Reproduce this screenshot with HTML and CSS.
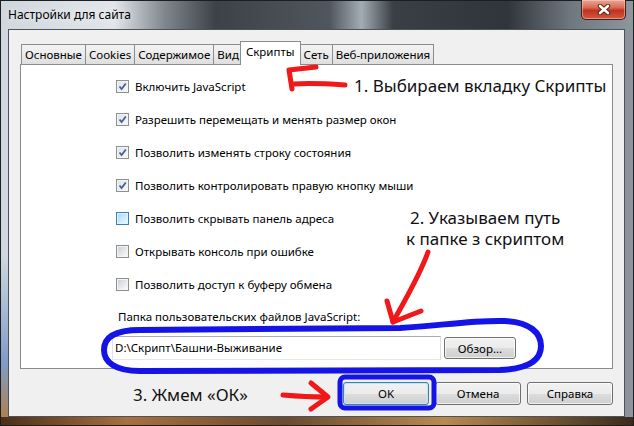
FILE: index.html
```html
<!DOCTYPE html>
<html lang="ru">
<head>
  <meta charset="UTF-8">
  <meta name="viewport" content="width=device-width, initial-scale=1.0">
  <title>Настройки для сайта</title>
  <link rel="stylesheet" href="styles.css">
</head>
<body>
  <div class="window">
    <!-- Заголовок окна -->
    <div class="titlebar">
      <span class="title">Настройки для сайта</span>
      <div class="close">
        <svg width="14" height="11" viewBox="0 0 14 11">
          <path d="M3 2 L11 9 M11 2 L3 9" stroke="#5a2418" stroke-width="4.5" stroke-linecap="round"/>
          <path d="M3 2 L11 9 M11 2 L3 9" stroke="#fff" stroke-width="2.6" stroke-linecap="round"/>
        </svg>
      </div>
    </div>

    <div class="client">
      <!-- Вкладки -->
      <div class="tabs">
        <div class="tab">Основные</div>
        <div class="tab">Cookies</div>
        <div class="tab">Содержимое</div>
        <div class="tab">Вид</div>
        <div class="tab active">Скрипты</div>
        <div class="tab">Сеть</div>
        <div class="tab">Веб-приложения</div>
      </div>

      <div class="panel">
        <div class="option"><span class="check checked"><svg width="9" height="9" viewBox="0 0 9 9"><path d="M1.5 4.5 L3.6 7 L7.8 1.5" fill="none" stroke="#4a5f8f" stroke-width="1.8"/></svg></span>Включить JavaScript</div>
        <div class="option"><span class="check checked"><svg width="9" height="9" viewBox="0 0 9 9"><path d="M1.5 4.5 L3.6 7 L7.8 1.5" fill="none" stroke="#4a5f8f" stroke-width="1.8"/></svg></span>Разрешить перемещать и менять размер окон</div>
        <div class="option"><span class="check checked"><svg width="9" height="9" viewBox="0 0 9 9"><path d="M1.5 4.5 L3.6 7 L7.8 1.5" fill="none" stroke="#4a5f8f" stroke-width="1.8"/></svg></span>Позволить изменять строку состояния</div>
        <div class="option"><span class="check checked"><svg width="9" height="9" viewBox="0 0 9 9"><path d="M1.5 4.5 L3.6 7 L7.8 1.5" fill="none" stroke="#4a5f8f" stroke-width="1.8"/></svg></span>Позволить контролировать правую кнопку мыши</div>
        <div class="option"><span class="check hover"></span>Позволить скрывать панель адреса</div>
        <div class="option"><span class="check"></span>Открывать консоль при ошибке</div>
        <div class="option"><span class="check"></span>Позволить доступ к буферу обмена</div>

        <div class="folder-label">Папка пользовательских файлов JavaScript:</div>
        <div class="folder-row">
          <div class="input">D:\Скрипт\Башни-Выживание</div>
          <div class="btn browse">Обзор...</div>
        </div>
      </div>

      <div class="buttons">
        <div class="btn default">OK</div>
        <div class="btn">Отмена</div>
        <div class="btn">Справка</div>
      </div>
    </div>

    <!-- Пометки поверх скриншота -->
    <div class="notes">
      <svg class="marks" width="634" height="426" viewBox="0 0 634 426">
        <g fill="none" stroke="#f01818" stroke-width="5" stroke-linecap="round" stroke-linejoin="round">
          <path d="M316 67 L289 70 L292 89"/>
          <path d="M294 84 C310 83 330 84 345 85"/>
          <path d="M428 252 C420 275 405 300 393 322"/>
          <path d="M387 301 L393 322 L421 311"/>
          <path d="M283 395 C295 396 310 397 325 397"/>
          <path d="M311 383 L328 397 L311 409"/>
        </g>
        <g fill="none" stroke="#1414e6" stroke-linecap="round" stroke-linejoin="round">
          <path d="M140 330 L400 328 C440 326 470 320 505 321 C530 322 541 333 541 346 C541 362 525 369 500 370 L140 371 C115 371 104 362 104 350 C104 337 115 330 140 330 Z" stroke-width="6"/>
          <rect x="340" y="377" width="94" height="31" rx="5" stroke-width="5"/>
        </g>
      </svg>
      <div class="note note-1">1. Выбираем вкладку Скрипты</div>
      <div class="note note-2">2. Указываем путь<br>к папке з скриптом</div>
      <div class="note note-3">3. Жмем «ОК»</div>
    </div>
  </div>
</body>
</html>
```

FILE: styles.css
```css
body {
  margin: 0;
  padding: 0;
  background: #000;
  font-family: 'Noto Sans', 'Open Sans', sans-serif;
  font-size: 11.5px;
  color: #000;
}

/* Окно */
.window {
  position: relative;
  width: 634px;
  height: 426px;
  box-sizing: border-box;
  padding: 0 9px 9px 8px;
  display: flex;
  flex-direction: column;
  background:
    linear-gradient(90deg, #4a2e1a, #a8703e 20%, #6a4a30 45%, #b88a50 70%, #3a2a1c) bottom / 100% 9px no-repeat,
    linear-gradient(180deg, transparent 60%, #7f9dc8 85%, #b57b3e 100%) left / 8px 100% no-repeat,
    linear-gradient(90deg, #cfd6dd 0%, #e2e6ea 18%, #7f868d 26%, #3d4248 34%, #50565d 52%, #a3acb4 57%, #3a3f45 62%, #30353b 80%, #6f777f 90%, #8e979f 100%);
  box-shadow: inset 0 0 0 1px #1c1f22;
}

/* Заголовок */
.titlebar {
  height: 29px;
  display: flex;
  justify-content: space-between;
  align-items: flex-start;
}

.title {
  margin-top: 7px;
  font-size: 12px;
  line-height: 16px;
  color: #000;
  text-shadow: 0 0 8px rgba(255, 255, 255, 0.9);
}

.close {
  width: 45px;
  height: 20px;
  box-sizing: border-box;
  margin-right: -1px;
  border: 1px solid #4a1b12;
  border-top: none;
  border-radius: 0 0 5px 5px;
  background: linear-gradient(180deg, #e9a898 0%, #d86a54 40%, #c2321d 55%, #cf5a44 100%);
  box-shadow: inset 0 0 0 1px rgba(255, 210, 200, 0.5);
  display: flex;
  justify-content: center;
  align-items: center;
}

/* Клиентская область */
.client {
  flex: 1;
  background: #f0f0f0;
  border: 1px solid #4d535a;
  padding: 0 11px 10px 11px;
}

.tabs {
  margin-top: 11px;
  height: 23px;
  padding-left: 1px;
  display: flex;
  align-items: flex-end;
}

.tab {
  height: 20px;
  box-sizing: border-box;
  padding: 0 3px;
  line-height: 19px;
  border: 1px solid #898c95;
  border-bottom: none;
  margin-right: -1px;
  background: linear-gradient(180deg, #f3f3f3 0%, #ebebeb 50%, #dedede 100%);
}

.tab.active {
  height: 24px;
  line-height: 20px;
  margin: 0 -1px -1px -2px;
  padding: 0 5px;
  background: #fff;
  position: relative;
  z-index: 1;
}

.panel {
  height: 305px;
  box-sizing: border-box;
  background: #fff;
  border: 1px solid #898c95;
  padding: 5px 0 0 95px;
}

.option {
  height: 33px;
  display: flex;
  align-items: center;
}

.check {
  width: 13px;
  height: 13px;
  box-sizing: border-box;
  margin-right: 6px;
  border: 1px solid #8e8f8f;
  background: linear-gradient(135deg, #c9cdd2 0%, #eef0f2 70%, #fbfbfb 100%);
  box-shadow: inset 0 0 0 1px #f4f4f4;
  display: flex;
  justify-content: center;
  align-items: center;
}

.check.checked {
  background: linear-gradient(135deg, #dfe2e6 0%, #f7f8f9 100%);
}

.check.hover {
  border-color: #3c7fb1;
  background: linear-gradient(135deg, #a8d8f6 0%, #d9f0fd 70%, #eef9fe 100%);
  box-shadow: inset 0 0 0 1px #dff2fd;
}

.folder-label {
  margin: 8px 0 0 2px;
  line-height: 16px;
}

.folder-row {
  margin: 11px 0 0 -4px;
  display: flex;
  align-items: center;
}

.input {
  width: 329px;
  height: 24px;
  box-sizing: border-box;
  border: 1px solid #abadb3;
  border-color: #abadb3 #dbdfe6 #e3e9ef #e2e3ea;
  padding-left: 2px;
  line-height: 22px;
  background: #fff;
}

.btn {
  height: 23px;
  box-sizing: border-box;
  border: 1px solid #707070;
  border-radius: 3px;
  background: linear-gradient(180deg, #f2f2f2 0%, #ebebeb 50%, #dddddd 51%, #cfcfcf 100%);
  box-shadow: inset 0 0 0 1px rgba(255, 255, 255, 0.7);
  display: flex;
  justify-content: center;
  align-items: center;
}

.browse {
  width: 72px;
  height: 22px;
  margin-left: 3px;
}

.buttons {
  margin-top: 13px;
  display: flex;
  justify-content: flex-end;
  gap: 6px;
}

.buttons .btn {
  width: 86px;
}

.btn.default {
  border-color: #3c7fb1;
  box-shadow: inset 0 0 0 1px #bfe6f7;
}

/* Пометки */
.notes .marks {
  position: absolute;
  left: 0;
  top: 0;
}

.note {
  position: absolute;
  font-size: 17px;
  line-height: 21px;
  color: #111;
}

.note-1 {
  left: 354px;
  top: 75px;
}

.note-2 {
  left: 406px;
  top: 207px;
  text-align: center;
}

.note-3 {
  left: 133px;
  top: 384px;
}
```
